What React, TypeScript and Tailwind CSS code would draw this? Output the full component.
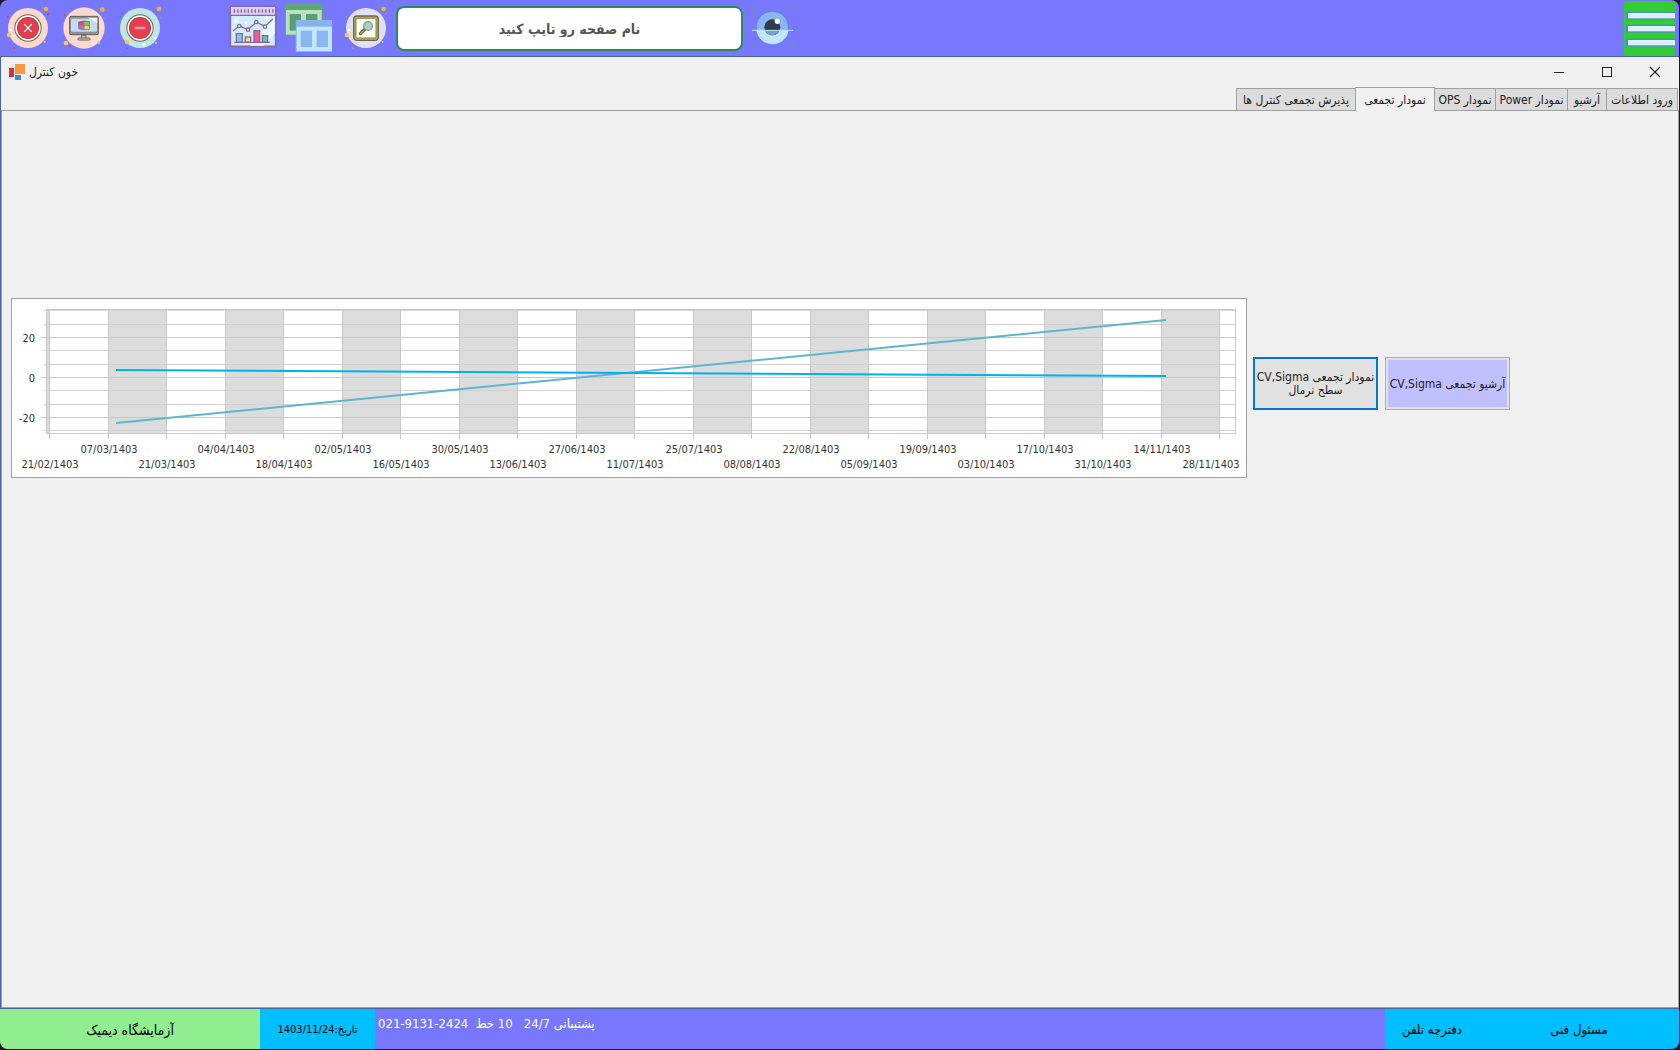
import React from "react";

const FONT = "font-['DejaVu_Sans_Condensed','DejaVu_Sans',sans-serif]";

function CloseIcon() {
  return (
    <svg viewBox="12 12 144 144" className="h-12 w-12" aria-hidden="true">
      <circle cx="84" cy="84" r="60" fill="#fad9cf" />
      <circle cx="84" cy="84" r="41" fill="#7d5f55" />
      <circle cx="84" cy="84" r="38" fill="#fffbee" />
      <circle cx="84" cy="84" r="33" fill="#7d4a4a" />
      <circle cx="84" cy="84" r="31" fill="#ee3a4f" />
      <path d="M73 73L95 95M95 73L73 95" stroke="#7d4a4a" strokeWidth="8" strokeLinecap="round" />
      <path d="M73 73L95 95M95 73L73 95" stroke="#fff3e0" strokeWidth="4" strokeLinecap="round" />
      <circle cx="138" cy="27" r="7" fill="#f2b31c" />
      <circle cx="128" cy="23" r="2" fill="#c79a49" />
      <circle cx="144" cy="42" r="3" fill="#ee3a4f" />
      <circle cx="24" cy="50" r="3" fill="#ee3a4f" />
      <circle cx="43" cy="144" r="3" fill="#ee3a4f" />
      <circle cx="27" cy="105" r="7" fill="#fcc64d" />
      <circle cx="33" cy="90" r="4" fill="#fff" />
      <circle cx="40" cy="109" r="3" fill="#fff" />
      <circle cx="134" cy="126" r="3" fill="#fcc64d" />
    </svg>
  );
}

function MonitorIcon() {
  return (
    <svg viewBox="180 12 144 144" className="h-12 w-12" aria-hidden="true">
      <circle cx="252" cy="84" r="62" fill="#fad9cf" />
      <rect x="209" y="49" width="86" height="55" rx="4" fill="#8a929c" stroke="#6f5a55" strokeWidth="3" />
      <rect x="213" y="56" width="78" height="39" fill="#c3dcf2" />
      <path d="M262 53h30v16z" fill="#e4f0fa" />
      <path d="M245 105h13v11h-13z" fill="#c9c3b0" stroke="#6f5a55" strokeWidth="3" />
      <rect x="234" y="114" width="36" height="6" rx="2" fill="#dcd5be" stroke="#6f5a55" strokeWidth="3" />
      <path d="M236 66l15-3v13h-15z" fill="#ee3f6d" />
      <path d="M253 63l15 1v12h-15z" fill="#7bc26a" />
      <path d="M236 77h15v12l-15-3z" fill="#9a7be0" />
      <path d="M253 77h15v11l-15 1z" fill="#f5e34f" />
      <path d="M236 66l15-3 17 2v23l-17 1-15-3zM252 63v26M236 77h32" fill="none" stroke="#6f5a55" strokeWidth="2" />
      <circle cx="307" cy="29" r="7" fill="#f2b31c" />
      <circle cx="297" cy="25" r="2" fill="#c79a49" />
      <circle cx="311" cy="53" r="2" fill="#c79a49" />
      <circle cx="194" cy="45" r="3" fill="#ee3a4f" />
      <circle cx="198" cy="129" r="7" fill="#fcc64d" />
      <circle cx="210" cy="138" r="3" fill="#ee3a4f" />
      <circle cx="278" cy="130" r="4" fill="#fff" />
      <circle cx="300" cy="111" r="3" fill="#fff" />
      <circle cx="296" cy="128" r="4" fill="#fcc64d" />
    </svg>
  );
}

function MinusIcon() {
  return (
    <svg viewBox="348 12 144 144" className="h-12 w-12" aria-hidden="true">
      <circle cx="420" cy="84" r="60" fill="#bfe6e4" />
      <circle cx="420" cy="84" r="41" fill="#7d5f55" />
      <circle cx="420" cy="84" r="38" fill="#fffbee" />
      <circle cx="420" cy="84" r="33" fill="#7d4a4a" />
      <circle cx="420" cy="84" r="31" fill="#ee3a4f" />
      <rect x="404" y="80" width="32" height="8" rx="2" fill="#c4aa9c" />
      <circle cx="477" cy="27" r="7" fill="#f2b31c" />
      <circle cx="467" cy="23" r="2" fill="#c79a49" />
      <circle cx="481" cy="53" r="2" fill="#c79a49" />
      <circle cx="361" cy="50" r="3" fill="#159fae" />
      <circle cx="382" cy="144" r="3" fill="#159fae" />
      <circle cx="381" cy="126" r="7" fill="#fcc64d" />
      <circle cx="433" cy="133" r="5" fill="#fff" />
      <circle cx="465" cy="114" r="4" fill="#fff" />
      <circle cx="468" cy="129" r="3" fill="#fcc64d" />
    </svg>
  );
}

function StatsIcon() {
  return (
    <svg viewBox="84 12 150 144" className="h-12 w-[50px]" aria-hidden="true">
      <rect x="91" y="19" width="136" height="120" rx="3" fill="#d3ecfb" stroke="#8a66a2" strokeWidth="5" />
      <path d="M150 137l70-88h5v50l-35 38z" fill="#e8f6fe" />
      <rect x="93" y="21" width="132" height="24" fill="#dccff0" />
      <path d="M91 46h136" stroke="#8a66a2" strokeWidth="4" />
      <path d="M101 33h120" stroke="#8a66a2" strokeWidth="11" strokeDasharray="4 6.5" />
      <rect x="109" y="101" width="18" height="26" fill="#6fcdf5" stroke="#8a66a2" strokeWidth="4" />
      <rect x="136" y="111" width="16" height="16" fill="#fbdc72" stroke="#8a66a2" strokeWidth="4" />
      <rect x="162" y="92" width="17" height="35" fill="#ef5f87" stroke="#8a66a2" strokeWidth="4" />
      <rect x="187" y="107" width="16" height="20" fill="#66c6a3" stroke="#8a66a2" strokeWidth="4" />
      <path d="M103 127h106" stroke="#8a66a2" strokeWidth="4" />
      <path d="M99 93l19-15 26 11 25-23 26 14 23-23" fill="none" stroke="#8a66a2" strokeWidth="4" />
      <circle cx="118" cy="78" r="5" fill="#fff" stroke="#8a66a2" strokeWidth="4" />
      <circle cx="144" cy="89" r="5" fill="#fff" stroke="#8a66a2" strokeWidth="4" />
      <circle cx="169" cy="66" r="5" fill="#fff" stroke="#8a66a2" strokeWidth="4" />
      <circle cx="195" cy="80" r="5" fill="#fff" stroke="#8a66a2" strokeWidth="4" />
      <path d="M107 54l2 7 7 2-7 2-2 7-2-7-7-2 7-2zM200 45l2 7 6 2-6 2-2 7-2-7-6-2 6-2z" fill="#fff" />
      <circle cx="138" cy="68" r="3" fill="#fff" />
    </svg>
  );
}

function WindowsIcon() {
  return (
    <svg viewBox="246 6 156 150" className="h-[50px] w-[52px]" aria-hidden="true">
      <rect x="255" y="11" width="113" height="96" fill="#5fa777" />
      <rect x="258" y="30" width="107" height="74" fill="#b9e2bf" />
      <rect x="269" y="42" width="34" height="50" fill="#5b9d72" />
      <rect x="318" y="42" width="34" height="50" fill="#5b9d72" />
      <rect x="287" y="60" width="109" height="96" fill="#86b3ee" />
      <rect x="290" y="80" width="106" height="73" fill="#c1e6ff" />
      <rect x="302" y="92" width="34" height="49" fill="#8bb6f0" />
      <rect x="350" y="92" width="34" height="49" fill="#8bb6f0" />
    </svg>
  );
}

function SearchIcon() {
  return (
    <svg viewBox="426 12 144 144" className="h-12 w-12" aria-hidden="true">
      <circle cx="498" cy="84" r="60" fill="#e0e0f5" />
      <rect x="461" y="48" width="74" height="73" rx="10" fill="#b7b35e" stroke="#6e6644" strokeWidth="4" />
      <rect x="468" y="55" width="60" height="59" rx="4" fill="#fffdf0" stroke="#85804c" strokeWidth="3" />
      <path d="M481 101l13-13" stroke="#5f5c3c" strokeWidth="9" strokeLinecap="round" />
      <path d="M481 101l9-9" stroke="#a5a354" strokeWidth="4" strokeLinecap="round" />
      <circle cx="504" cy="78" r="13" fill="#9bd4d8" stroke="#93938b" strokeWidth="4" />
      <circle cx="551" cy="27" r="7" fill="#f2b31c" />
      <circle cx="542" cy="24" r="2" fill="#c79a49" />
      <circle cx="558" cy="42" r="3" fill="#8f93c9" />
      <circle cx="438" cy="50" r="3" fill="#8f93c9" />
      <circle cx="458" cy="144" r="3" fill="#8f93c9" />
      <circle cx="441" cy="105" r="7" fill="#fcc64d" />
      <circle cx="447" cy="90" r="4" fill="#fff" />
      <circle cx="548" cy="126" r="3" fill="#fcc64d" />
    </svg>
  );
}

function EyeIcon() {
  return (
    <svg viewBox="1080 12 138 144" className="h-12 w-[46px]" aria-hidden="true">
      <path
        d="M1087 42V24h18M1191 24h18v18M1209 124v18h-18M1105 142h-18v-18"
        fill="none"
        stroke="#708db0"
        strokeWidth="3"
      />
      <circle cx="1147" cy="82" r="50" fill="#5c85cf" />
      <circle cx="1147" cy="82" r="47" fill="#8ab5ee" />
      <path d="M1099 91a49 49 0 0 0 97 0z" fill="#c1e6ff" />
      <circle cx="1147" cy="82" r="24" fill="#2d3b4d" />
      <path d="M1125 91a24 24 0 0 0 44 0z" fill="#7b9dcb" />
      <circle cx="1162" cy="64" r="8" fill="#fff" />
      <path d="M1086 91h123" stroke="#c1e6ff" strokeWidth="3" />
    </svg>
  );
}

function MenuIcon() {
  return (
    <svg viewBox="372 3 153 165" className="h-[55px] w-[51px]" aria-hidden="true">
      <rect x="372" y="3" width="153" height="165" rx="10" fill="#32cd32" />
      {[36, 75, 117].map((y) => (
        <g key={y}>
          <rect x="378" y={y - 1} width="147" height="24" fill="#4a90c0" />
          <rect x="384" y={y + 3} width="141" height="16" fill="#dcefff" />
        </g>
      ))}
    </svg>
  );
}

const labels = [
  "21/02/1403", "07/03/1403", "21/03/1403", "04/04/1403", "18/04/1403", "02/05/1403", "16/05/1403",
  "30/05/1403", "13/06/1403", "27/06/1403", "11/07/1403", "25/07/1403", "08/08/1403", "22/08/1403",
  "05/09/1403", "19/09/1403", "03/10/1403", "17/10/1403", "31/10/1403", "14/11/1403", "28/11/1403",
];
const tickX = labels.map((_, i) => Math.round(38 + i * 58.5));
const gridY = [12, 26, 39, 52, 66, 79, 92, 106, 119, 132];
const majors = [
  { y: 39, text: "20" },
  { y: 79, text: "0" },
  { y: 119, text: "-20" },
];
const LABEL_MAX_X = 1200;

function TrendChart() {
  return (
    <svg
      viewBox="0 0 1236 180"
      className={`block w-full text-[11px] ${FONT}`}
      role="img"
      aria-label="CV,Sigma"
    >
      <rect x="0.5" y="0.5" width="1235" height="179" fill="#fff" stroke="#a0a0a0" />
      <rect x="35" y="11" width="3" height="124" fill="#dcdcdc" />
      {tickX.map((x, i) =>
        i % 2 === 1 ? <rect key={x} x={x} y="11" width={tickX[i + 1] - x} height="124" fill="#dcdcdc" /> : null,
      )}
      {gridY.map((y) => (
        <path
          key={y}
          d={`M${majors.some((m) => m.y === y) ? 30 : 33} ${y + 0.5}H1224`}
          stroke={majors.some((m) => m.y === y) ? "#c8c8c8" : "#d2d2d2"}
        />
      ))}
      {tickX.map((x) => (
        <path key={x} d={`M${x + 0.5} 11V141`} stroke="#c8c8c8" />
      ))}
      <rect x="35.5" y="11.5" width="1189" height="124" fill="none" stroke="#c8c8c8" />
      <path d="M105 125L1155 22" stroke="#5fb5cc" strokeWidth="2" />
      <path d="M105 72L1155 78" stroke="#00b0f0" strokeWidth="2" />
      {majors.map((m) => (
        <text key={m.text} x="24" y={m.y + 5} textAnchor="end" fill="#333">
          {m.text}
        </text>
      ))}
      {labels.map((label, i) => (
        <text
          key={label}
          x={Math.min(tickX[i] + 1, LABEL_MAX_X)}
          y={i % 2 === 1 ? 155 : 170}
          textAnchor="middle"
          fill="#333"
        >
          {label}
        </text>
      ))}
    </svg>
  );
}

const tabs = [
  { name: "ورود اطلاعات", size: "w-[72px]" },
  { name: "آرشیو", size: "w-10" },
  { name: "نمودار Power", size: "w-[73px]" },
  { name: "نمودار OPS", size: "w-[62px]" },
  { name: "نمودار تجمعی", size: "w-20", active: true },
  { name: "پذیرش تجمعی کنترل ها", size: "w-[120px]" },
];

export default function App() {
  return (
    <div className={`min-h-screen bg-[#1c1c1e] pr-px pb-px text-xs ${FONT}`}>
      <div className="flex min-h-[calc(100vh-1px)] flex-col overflow-hidden rounded-lg bg-[#7878ff]">
        <header className="flex h-14 shrink-0 items-start">
          <div className="flex gap-2 pt-1 pl-1">
            <button aria-label="بستن"><CloseIcon /></button>
            <button aria-label="دسکتاپ"><MonitorIcon /></button>
            <button aria-label="کوچک"><MinusIcon /></button>
          </div>
          <button aria-label="نمودار" className="ml-16 pt-1"><StatsIcon /></button>
          <button aria-label="صفحات" className="ml-1 pt-0.5"><WindowsIcon /></button>
          <button aria-label="جستجو" className="ml-2 pt-1"><SearchIcon /></button>
          <input
            dir="rtl"
            type="text"
            aria-label="نام صفحه"
            placeholder="نام صفحه رو تایپ کنید"
            className="mt-1.5 ml-1.5 h-[45px] w-[347px] rounded-lg border-2 border-[#2e8b57] bg-white text-center text-sm font-bold text-[#404040] outline-none placeholder:text-[#555]"
          />
          <button aria-label="نمایش" className="ml-[7px] pt-1"><EyeIcon /></button>
          <button aria-label="منو" className="mt-px mr-1 ml-auto"><MenuIcon /></button>
        </header>

        <main className="flex grow flex-col border border-r-0 border-[#4a66a0] bg-[#f0f0f0]">
          <div className="flex h-[29px] items-center">
            <svg viewBox="27 192 48 48" className="ml-2 h-4 w-4" aria-hidden="true">
              <rect x="27" y="204" width="15" height="27" fill="#d1304a" />
              <rect x="45" y="192" width="30" height="30" fill="#f49a3c" />
              <rect x="45" y="225" width="18" height="15" fill="#4a8acb" />
            </svg>
            <h1 dir="rtl" className="ml-1 text-xs text-[#222]">خون کنترل</h1>
            <div className="ml-auto flex">
              <button aria-label="minimize" className="flex h-[29px] w-12 items-center justify-center">
                <svg viewBox="0 0 12 12" className="h-3 w-3"><path d="M1 6.5h10" stroke="#222" /></svg>
              </button>
              <button aria-label="maximize" className="flex h-[29px] w-12 items-center justify-center">
                <svg viewBox="0 0 12 12" className="h-3 w-3"><rect x="1.5" y="1.5" width="9" height="9" fill="none" stroke="#222" /></svg>
              </button>
              <button aria-label="close window" className="flex h-[29px] w-12 items-center justify-center">
                <svg viewBox="0 0 12 12" className="h-3 w-3"><path d="M1 1l10 10M11 1L1 11" stroke="#222" strokeWidth="1.2" /></svg>
              </button>
            </div>
          </div>

          <div role="tablist" dir="rtl" className="flex h-6 items-end pr-0.5">
            {tabs.map((t) => (
              <button
                key={t.name}
                role="tab"
                aria-selected={!!t.active}
                className={
                  t.active
                    ? `${t.size} relative z-10 -mb-px -mr-px h-6 border border-b-0 border-[#a0a0a0] bg-[#f0f0f0] whitespace-nowrap text-[#222]`
                    : `${t.size} -mr-px h-[22px] border border-b-0 border-[#a0a0a0] bg-[#dcdcdc] whitespace-nowrap text-[#222]`
                }
              >
                {t.name}
              </button>
            ))}
          </div>

          <section
            role="tabpanel"
            className="flex grow items-start gap-1.5 border border-[#a0a0a0] pt-[187px] pr-[168px] pl-[9px]"
          >
            <div className="min-w-0 flex-1"><TrendChart /></div>
            <div className="mt-[59px] flex shrink-0 gap-[7px]">
              <button
                dir="rtl"
                className="h-[53px] w-[125px] border-2 border-[#0078d7] bg-[#e1e1e1] leading-[13px] whitespace-nowrap text-[#222]"
              >
                نمودار تجمعی CV,Sigma<br />سطح نرمال
              </button>
              <button
                dir="rtl"
                className="h-[53px] w-[125px] border border-[#adadad] bg-[#e1e1e1] p-0.5 text-[#222]"
              >
                <span className="flex h-full items-center justify-center bg-[#c0c0ff] whitespace-nowrap">آرشیو تجمعی CV,Sigma</span>
              </button>
            </div>
          </section>
        </main>

        <footer className="flex h-10 shrink-0 text-black">
          <div dir="rtl" className="flex w-[260px] items-center justify-center bg-[#90ee90] pt-0.5 text-sm">
            آزمایشگاه دیمیک
          </div>
          <div dir="rtl" className="flex w-[115px] items-center justify-center bg-[#00bfff] pt-0.5 text-[11px]">
            تاریخ:1403/11/24
          </div>
          <div className="flex grow pt-1.5 pl-[3px] text-[13px] text-white">
            <p dir="rtl" className="whitespace-pre">
              {"پشتیبانی 24/7   10 خط  "}
              <bdi dir="ltr">021-9131-2424</bdi>
            </p>
          </div>
          <div className="flex w-[294px] items-center bg-[#00bfff] pt-0.5 text-[13px]">
            <button dir="rtl" className="w-[94px]">دفترچه تلفن</button>
            <button dir="rtl" className="grow">مسئول فنی</button>
          </div>
        </footer>
      </div>
    </div>
  );
}
